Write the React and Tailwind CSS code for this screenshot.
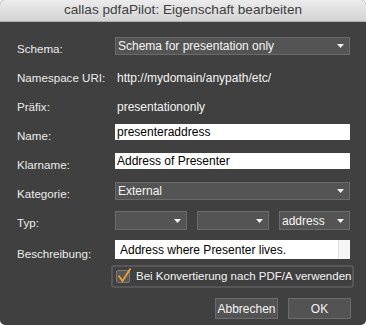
import React from 'react';

const Arrow = () => (
    <svg width="7" height="4" viewBox="0 0 7 4" className="shrink-0">
        <path d="M0 0 H7 L3.5 4 Z" fill="#f2f2f2" />
    </svg>
);

const Select = ({ value, className = '' }) => (
    <div className={`h-full flex items-center justify-between bg-[#545454] border border-[#6b6b6b] pl-[2px] pr-[5px] text-[12px] text-[#f4f4f4] ${className}`}>
        <span className="leading-none">{value}</span>
        <Arrow />
    </div>
);

// labels sit a few pixels below the middle of their control
const Row = ({ label, children, className = '', h = 'h-[18px]', shift = 'pt-[5px]' }) => (
    <div className={`flex items-center ${h} ${className}`}>
        <div className={`w-[98px] shrink-0 text-[11.6px] text-[#ececec] ${shift}`}>{label}</div>
        <div className="w-[235px] h-full flex items-center">{children}</div>
    </div>
);

const App = () => {
    return (
        <div className="w-[366px] h-[325px] bg-white" style={{ fontFamily: '"Liberation Sans", Arial, sans-serif' }}>
            <div className="w-full h-full rounded-[5px] overflow-hidden bg-[#404040] flex flex-col">
                {/* title bar */}
                <div className="h-[22px] shrink-0 bg-gradient-to-b from-[#ececec] to-[#d4d4d4] border-b border-[#b0b0b0] flex items-center justify-center text-[13.6px] text-[#404040]">
                    callas pdfaPilot: Eigenschaft bearbeiten
                </div>

                <div className="pl-[17px] flex flex-col">
                    <Row label="Schema:" className="mt-[15px]">
                        <Select value="Schema for presentation only" className="w-full" />
                    </Row>
                    <Row label="Namespace URI:" className="mt-[14px]" shift="">
                        <span className="pl-[2px] text-[12px] text-[#f4f4f4]">http://mydomain/anypath/etc/</span>
                    </Row>
                    <Row label="Präfix:" className="mt-[11px]" shift="">
                        <span className="pl-[2px] text-[12px] text-[#f4f4f4]">presentationonly</span>
                    </Row>
                    <Row label="Name:" className="mt-[8px]" h="h-[16px]" shift="pt-[7px]">
                        <div className="w-full h-full bg-white pl-[2px] flex items-center text-[12px] text-black">presenteraddress</div>
                    </Row>
                    <Row label="Klarname:" className="mt-[13px]" h="h-[16px]" shift="pt-[7px]">
                        <div className="w-full h-full bg-white pl-[2px] flex items-center text-[12px] text-black">Address of Presenter</div>
                    </Row>
                    <Row label="Kategorie:" className="mt-[13px]">
                        <Select value="External" className="w-full" />
                    </Row>
                    <Row label="Typ:" className="mt-[11px]" h="h-[19px]">
                        <div className="w-full h-full flex gap-[10px]">
                            <Select value="" className="w-[72px]" />
                            <Select value="" className="w-[72px]" />
                            <Select value="address" className="w-[71px]" />
                        </div>
                    </Row>
                    <div className="flex items-start h-[19px] mt-[10px]">
                        <div className="w-[98px] shrink-0 text-[11.6px] text-[#ececec] pt-[5px]">Beschreibung:</div>
                        <div className="w-[235px] h-full bg-white flex">
                            <div className="flex-1 pl-[5px] pt-[1px] text-[12px] text-black">Address where Presenter lives.</div>
                            <div className="w-[12px] h-full bg-[#f6f6f6] border-l border-[#e2e2e2]" />
                        </div>
                    </div>

                    {/* checkbox group */}
                    <div className="ml-[94px] mt-[6px] w-[243px] h-[23px] rounded-[3px] border-2 border-[#575757] flex items-center pl-[3px] gap-[6px]">
                        <div className="relative w-[14px] h-[13px] bg-[#575757] border border-[#7a7a7a] rounded-[2px]">
                            <svg width="16" height="16" viewBox="0 0 16 16" className="absolute left-[-1px] top-[-4px]">
                                <path d="M2.5 8.5 L6.5 14 L14.5 1.5" fill="none" stroke="#f0a030" strokeWidth="1.8" />
                            </svg>
                        </div>
                        <span className="text-[11.5px] text-[#f4f4f4] whitespace-nowrap">Bei Konvertierung nach PDF/A verwenden</span>
                    </div>

                    {/* buttons */}
                    <div className="mt-[10px] flex justify-end gap-[10px] pr-[15px]">
                        <button className="w-[63px] h-[21px] bg-[#535353] border border-[#6b6b6b] text-[12px] text-[#f4f4f4]">Abbrechen</button>
                        <button className="w-[63px] h-[21px] bg-[#535353] border border-[#6b6b6b] text-[12px] text-[#f4f4f4]">OK</button>
                    </div>
                </div>
            </div>
        </div>
    );
};

export default App;
